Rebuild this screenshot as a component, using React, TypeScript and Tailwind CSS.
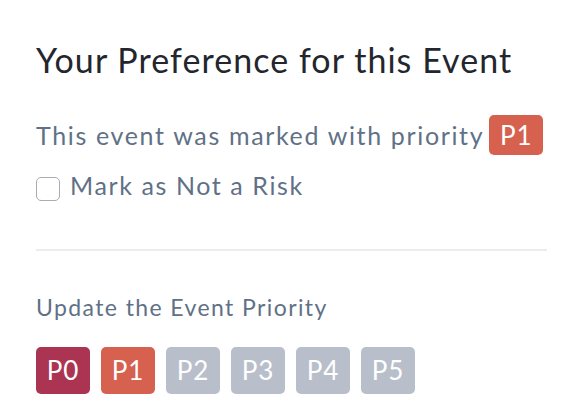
import React from "react";

export default function App() {
  const prios = [
    { label: "P0", cls: "bg-[#ab3452]" },
    { label: "P1", cls: "bg-[#d6614f]" },
    { label: "P2", cls: "bg-[#b8bfcb]" },
    { label: "P3", cls: "bg-[#b8bfcb]" },
    { label: "P4", cls: "bg-[#b8bfcb]" },
    { label: "P5", cls: "bg-[#b8bfcb]" },
  ];
  return (
    <div
      className="w-[582px] h-[416px] bg-white px-[36px] pt-[40px]"
      style={{ fontFamily: "Lato, 'Open Sans', sans-serif" }}
    >
      <h2 className="text-[34px] leading-[40px] tracking-[1.05px] text-[#23272d] font-normal whitespace-nowrap">
        Your Preference for this Event
      </h2>
      <div className="mt-[35px] flex items-center text-[25px] leading-[40px] text-[#5f7186] whitespace-nowrap">
        <span className="tracking-[1.65px]">This event was marked with priority</span>
        <span className="ml-[5px] inline-flex h-[40px] w-[54px] items-center justify-center rounded-[5px] bg-[#d6614f] text-[26px] tracking-[1px] text-white">
          P1
        </span>
      </div>
      <label className="mt-[15px] flex items-start gap-[10px] text-[25px] leading-[30px] text-[#5f7186] whitespace-nowrap">
        <span className="mt-[7px] inline-block h-[24px] w-[24px] rounded-[5px] border border-[#a9adb2] bg-white" />
        <span className="tracking-[1.6px]">Mark as Not a Risk</span>
      </label>
      <div className="mt-[48px] h-[2px] w-[511px] bg-[#ececec]" />
      <div className="mt-[41px] text-[23px] leading-[30px] tracking-[1.4px] text-[#5f7186] whitespace-nowrap">
        Update the Event Priority
      </div>
      <div className="mt-[25px] flex gap-[11px]">
        {prios.map((p) => (
          <span
            key={p.label}
            className={`inline-flex h-[47px] w-[54px] items-center justify-center rounded-[5px] text-[26px] tracking-[1px] text-white ${p.cls}`}
          >
            {p.label}
          </span>
        ))}
      </div>
    </div>
  );
}
